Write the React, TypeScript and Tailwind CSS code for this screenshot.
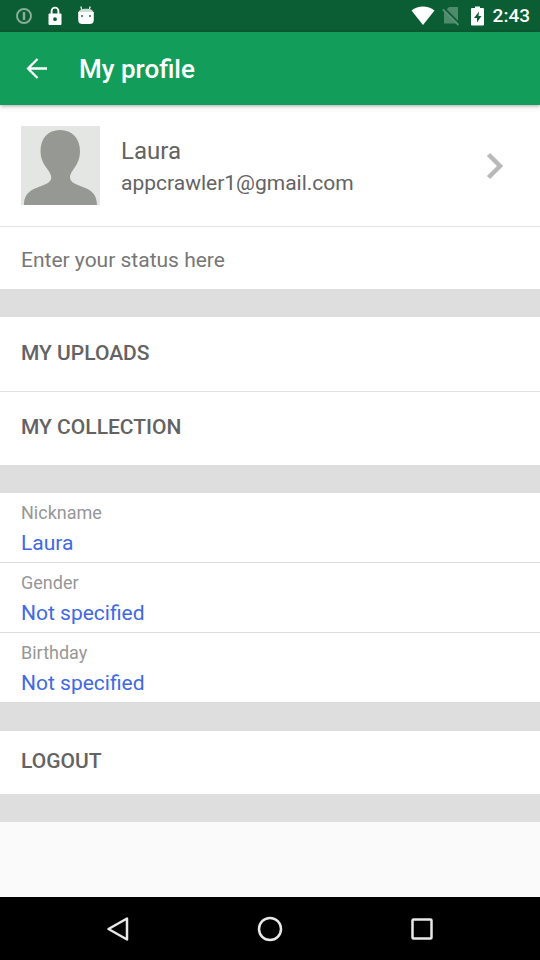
import type { ReactNode } from 'react';

const details = [
  { label: 'Nickname', value: 'Laura' },
  { label: 'Gender', value: 'Not specified' },
  { label: 'Birthday', value: 'Not specified' },
];

function StatusBar() {
  return (
    <div className="flex h-8 shrink-0 items-center justify-between bg-[#0b5d33] pr-[10px] pl-[15px] text-white">
      <div className="flex items-center gap-[15px]">
        <svg className="size-[18px]" viewBox="0 0 18 18" fill="none" stroke="#86ae99" strokeWidth="2" aria-hidden="true">
          <circle cx="9" cy="9" r="7" />
          <path d="M9 5v8" strokeWidth="2.5" />
        </svg>
        <svg className="h-[20px] w-[14px]" viewBox="0 0 14 20" aria-hidden="true">
          <path d="M3.6 8V5a3.4 3.4 0 0 1 6.8 0v3" fill="none" stroke="white" strokeWidth="1.9" />
          <path fill="white" fillRule="evenodd" d="M1.5 7.5h11a1 1 0 0 1 1 1v9.500a1 1 0 0 1-1 1h-11a1 1 0 0 1-1-1V8.500a1 1 0 0 1 1-1zM7 11.300a1.900 1.900 0 1 0 0 3.800 1.900 1.900 0 0 0 0-3.800z" />
        </svg>
        <svg className="h-[20px] w-[18px]" viewBox="0 0 18 20" aria-hidden="true">
          <path d="M3.800 .5 5 4.500M13.200 .5 12 4.500" stroke="white" strokeWidth="1.200" />
          <path d="M1.500 7C1.500 4.200 4.500 2.800 9 2.800S16.500 4.200 16.500 7z" fill="#c9dcd1" />
          <path d="M1.200 6h15.600v8c0 3-2 4-4 4H5.200c-2 0-4-1-4-4z" fill="white" />
          <circle cx="5" cy="10" r="0.900" fill="#0b5d33" />
          <circle cx="13" cy="10" r="0.900" fill="#0b5d33" />
        </svg>
      </div>
      <div className="flex items-center">
        <svg className="mr-[7px] h-[20px] w-[24px]" viewBox="0 0 24 20" aria-hidden="true">
          <path d="M.5 4.500C7-.7 17-.7 23.500 4.500L12 19z" fill="white" />
        </svg>
        <svg className="mr-[11px] h-[20px] w-[18px]" viewBox="0 0 18 20" aria-hidden="true">
          <path d="M7 1h9v16.500H2V6z" fill="#4f8b6b" />
          <path d="M1.500 1.500 18 18" stroke="#0b5d33" strokeWidth="1.800" />
          <path d="M.8 3.300 16.500 19" stroke="#5b9375" strokeWidth="1.800" />
        </svg>
        <svg className="mr-[9px] h-[20px] w-[13px]" viewBox="0 0 13 20" aria-hidden="true">
          <path d="M4 .5h5V2h3q1 0 1 1v15.500q0 1-1 1H1q-1 0-1-1V3q0-1 1-1h3z" fill="white" />
          <path d="M8 5.500 3 12h3v4.500L10.500 10H7.500z" fill="#0b5d33" />
        </svg>
        <span className="text-[19px] leading-6 font-medium">2:43</span>
      </div>
    </div>
  );
}

function SectionGap() {
  return <div className="h-7 shrink-0 bg-[#dedede]" />;
}

function ActionRow({ children, className }: { children: ReactNode; className: string }) {
  return (
    <button type="button" className={`block w-full bg-white px-[21px] pb-[3px] text-left text-[21px] leading-6 font-medium text-[#636363] ${className}`}>
      {children}
    </button>
  );
}

export default function App() {
  return (
    <div className="flex min-h-screen flex-col bg-[#fafafa] font-[Roboto,sans-serif]">
      <StatusBar />
      <header className="z-10 flex h-[73px] shrink-0 items-center gap-[30px] bg-[#129e5a] pl-6 text-white shadow-[0_1px_4px_rgba(0,0,0,0.35)]">
        <button type="button" aria-label="Back">
          <svg className="size-[25px]" viewBox="0 0 25 25" fill="none" stroke="white" strokeWidth="2.300" aria-hidden="true">
            <path d="M23 12.500H4M13.500 3 4 12.500l9.500 9.500" />
          </svg>
        </button>
        <h1 className="text-[26px] leading-8 font-medium">My profile</h1>
      </header>

      <main className="flex-1">
        <button type="button" className="flex w-full items-center border-b border-[#e3e3e3] bg-white py-[21px] pr-9 pl-[21px] text-left text-[#636363]">
          <svg className="size-[79px] shrink-0" viewBox="0 0 79 79" role="img" aria-label="Profile picture">
            <path d="M0 0h79v79H0z" fill="#e4e6e3" />
            <path d="M39 4C27 4 19.500 12.500 19.500 25c0 9 4 14 7.500 19 4 5.500 5 10-1 13.500C18 62 3 62.500 3 79h73c0-16.500-14-17-22.500-21.500-6-3.500-5.500-8-1.500-13.500 3.500-5 7-10 7-19C59 12.500 51 4 39 4z" fill="#969894" />
          </svg>
          <span className="ml-[21px] flex min-w-0 flex-1 flex-col pt-[3px]">
            <span className="text-2xl leading-8">Laura</span>
            <span className="text-[21px] leading-8">appcrawler1@gmail.com</span>
          </span>
          <svg className="h-[28px] w-[18px] shrink-0" viewBox="0 0 18 28" fill="none" stroke="#b9b9b9" strokeWidth="4.500" aria-hidden="true">
            <path d="M2.500 2.500 14 14 2.500 25.500" />
          </svg>
        </button>
        <input
          type="text"
          aria-label="Status"
          placeholder="Enter your status here"
          className="block h-[62px] w-full bg-white px-[21px] pt-[3px] text-[21px] leading-6 text-[#636363] outline-none placeholder:text-[#777777]"
        />
        <SectionGap />
        <ActionRow className="h-[75px] border-b border-[#e3e3e3]">MY UPLOADS</ActionRow>
        <ActionRow className="h-[73px]">MY COLLECTION</ActionRow>
        <SectionGap />
        {details.map(({ label, value }) => (
          <button key={label} type="button" className="block w-full border-b border-[#dcdcdc] bg-white px-[21px] pt-1 pb-[5px] text-left">
            <span className="block text-lg leading-8 text-[#979797]">{label}</span>
            <span className="block text-[21px] leading-7 text-[#4169e1]">{value}</span>
          </button>
        ))}
        <SectionGap />
        <ActionRow className="h-[63px]">LOGOUT</ActionRow>
        <SectionGap />
      </main>

      <nav aria-label="System" className="grid h-[63px] shrink-0 grid-cols-3 place-items-center bg-black px-[42px]">
        <button type="button" aria-label="Back">
          <svg className="size-7" viewBox="0 0 28 28" fill="none" stroke="#e8e8e8" strokeWidth="2.500" strokeLinejoin="round" aria-hidden="true">
            <path d="M23 3.500v21L4.500 14z" />
          </svg>
        </button>
        <button type="button" aria-label="Home">
          <svg className="size-7" viewBox="0 0 28 28" fill="none" stroke="#e8e8e8" strokeWidth="2.500" aria-hidden="true">
            <circle cx="14" cy="14" r="11" />
          </svg>
        </button>
        <button type="button" aria-label="Recent apps">
          <svg className="size-7" viewBox="0 0 28 28" fill="none" stroke="#e8e8e8" strokeWidth="2.500" aria-hidden="true">
            <rect x="4.500" y="4.500" width="19" height="19" rx="1" />
          </svg>
        </button>
      </nav>
    </div>
  );
}
